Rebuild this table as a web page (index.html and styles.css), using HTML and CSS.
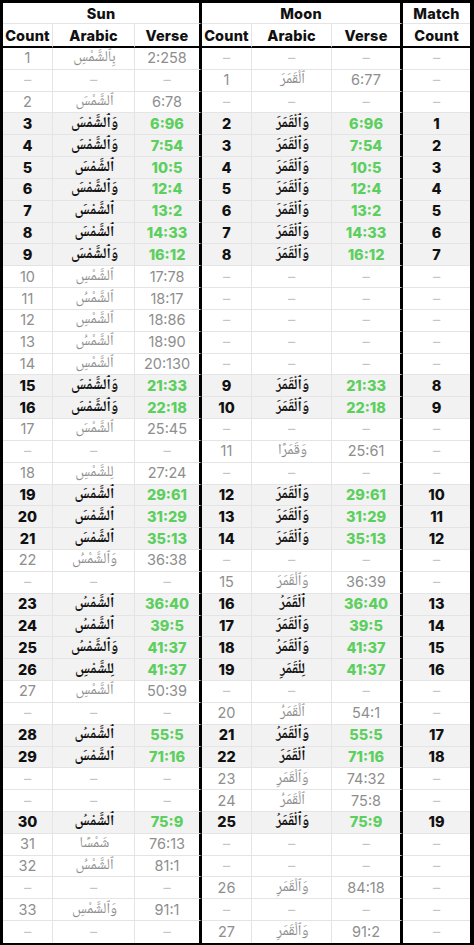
FILE: index.html
```html
<!DOCTYPE html>
<html lang="en">
<head>
<meta charset="utf-8">
<title>Sun and Moon</title>
<link rel="stylesheet" href="styles.css">
</head>
<body>
<table class="grid">
  <colgroup>
    <col class="w-count"><col class="w-ar1"><col class="w-v1">
    <col class="w-count"><col class="w-ar2"><col class="w-v2">
    <col class="w-match">
  </colgroup>
  <thead>
    <tr class="h1">
      <th colspan="3" class="sep">Sun</th>
      <th colspan="3" class="sep">Moon</th>
      <th>Match</th>
    </tr>
    <tr class="h2">
      <th>Count</th><th>Arabic</th><th class="sep">Verse</th>
      <th>Count</th><th>Arabic</th><th class="sep">Verse</th>
      <th>Count</th>
    </tr>
  </thead>
  <tbody>
    <tr class="s"><td>1</td><td class="ar">بِٱلشَّمْسِ</td><td class="sep">2:258</td><td class="d">–</td><td class="d">–</td><td class="sep d">–</td><td class="d">–</td></tr>
    <tr class="o"><td class="d">–</td><td class="d">–</td><td class="sep d">–</td><td>1</td><td class="ar">ٱلْقَمَرَ</td><td class="sep">6:77</td><td class="d">–</td></tr>
    <tr class="s"><td>2</td><td class="ar">ٱلشَّمْسَ</td><td class="sep">6:78</td><td class="d">–</td><td class="d">–</td><td class="sep d">–</td><td class="d">–</td></tr>
    <tr class="m"><td>3</td><td class="ar">وَٱلشَّمْسَ</td><td class="sep g">6:96</td><td>2</td><td class="ar">وَٱلْقَمَرَ</td><td class="sep g">6:96</td><td>1</td></tr>
    <tr class="m"><td>4</td><td class="ar">وَٱلشَّمْسَ</td><td class="sep g">7:54</td><td>3</td><td class="ar">وَٱلْقَمَرَ</td><td class="sep g">7:54</td><td>2</td></tr>
    <tr class="m"><td>5</td><td class="ar">ٱلشَّمْسَ</td><td class="sep g">10:5</td><td>4</td><td class="ar">وَٱلْقَمَرَ</td><td class="sep g">10:5</td><td>3</td></tr>
    <tr class="m"><td>6</td><td class="ar">وَٱلشَّمْسَ</td><td class="sep g">12:4</td><td>5</td><td class="ar">وَٱلْقَمَرَ</td><td class="sep g">12:4</td><td>4</td></tr>
    <tr class="m"><td>7</td><td class="ar">ٱلشَّمْسَ</td><td class="sep g">13:2</td><td>6</td><td class="ar">وَٱلْقَمَرَ</td><td class="sep g">13:2</td><td>5</td></tr>
    <tr class="m"><td>8</td><td class="ar">ٱلشَّمْسَ</td><td class="sep g">14:33</td><td>7</td><td class="ar">وَٱلْقَمَرَ</td><td class="sep g">14:33</td><td>6</td></tr>
    <tr class="m"><td>9</td><td class="ar">وَٱلشَّمْسَ</td><td class="sep g">16:12</td><td>8</td><td class="ar">وَٱلْقَمَرَ</td><td class="sep g">16:12</td><td>7</td></tr>
    <tr class="s"><td>10</td><td class="ar">ٱلشَّمْسِ</td><td class="sep">17:78</td><td class="d">–</td><td class="d">–</td><td class="sep d">–</td><td class="d">–</td></tr>
    <tr class="s"><td>11</td><td class="ar">ٱلشَّمْسُ</td><td class="sep">18:17</td><td class="d">–</td><td class="d">–</td><td class="sep d">–</td><td class="d">–</td></tr>
    <tr class="s"><td>12</td><td class="ar">ٱلشَّمْسِ</td><td class="sep">18:86</td><td class="d">–</td><td class="d">–</td><td class="sep d">–</td><td class="d">–</td></tr>
    <tr class="s"><td>13</td><td class="ar">ٱلشَّمْسُ</td><td class="sep">18:90</td><td class="d">–</td><td class="d">–</td><td class="sep d">–</td><td class="d">–</td></tr>
    <tr class="s"><td>14</td><td class="ar">ٱلشَّمْسِ</td><td class="sep">20:130</td><td class="d">–</td><td class="d">–</td><td class="sep d">–</td><td class="d">–</td></tr>
    <tr class="m"><td>15</td><td class="ar">وَٱلشَّمْسَ</td><td class="sep g">21:33</td><td>9</td><td class="ar">وَٱلْقَمَرَ</td><td class="sep g">21:33</td><td>8</td></tr>
    <tr class="m"><td>16</td><td class="ar">وَٱلشَّمْسَ</td><td class="sep g">22:18</td><td>10</td><td class="ar">وَٱلْقَمَرَ</td><td class="sep g">22:18</td><td>9</td></tr>
    <tr class="s"><td>17</td><td class="ar">ٱلشَّمْسَ</td><td class="sep">25:45</td><td class="d">–</td><td class="d">–</td><td class="sep d">–</td><td class="d">–</td></tr>
    <tr class="o"><td class="d">–</td><td class="d">–</td><td class="sep d">–</td><td>11</td><td class="ar">وَقَمَرًا</td><td class="sep">25:61</td><td class="d">–</td></tr>
    <tr class="s"><td>18</td><td class="ar">لِلشَّمْسِ</td><td class="sep">27:24</td><td class="d">–</td><td class="d">–</td><td class="sep d">–</td><td class="d">–</td></tr>
    <tr class="m"><td>19</td><td class="ar">ٱلشَّمْسَ</td><td class="sep g">29:61</td><td>12</td><td class="ar">وَٱلْقَمَرَ</td><td class="sep g">29:61</td><td>10</td></tr>
    <tr class="m"><td>20</td><td class="ar">ٱلشَّمْسَ</td><td class="sep g">31:29</td><td>13</td><td class="ar">وَٱلْقَمَرَ</td><td class="sep g">31:29</td><td>11</td></tr>
    <tr class="m"><td>21</td><td class="ar">ٱلشَّمْسَ</td><td class="sep g">35:13</td><td>14</td><td class="ar">وَٱلْقَمَرَ</td><td class="sep g">35:13</td><td>12</td></tr>
    <tr class="s"><td>22</td><td class="ar">وَٱلشَّمْسُ</td><td class="sep">36:38</td><td class="d">–</td><td class="d">–</td><td class="sep d">–</td><td class="d">–</td></tr>
    <tr class="o"><td class="d">–</td><td class="d">–</td><td class="sep d">–</td><td>15</td><td class="ar">وَٱلْقَمَرَ</td><td class="sep">36:39</td><td class="d">–</td></tr>
    <tr class="m"><td>23</td><td class="ar">ٱلشَّمْسُ</td><td class="sep g">36:40</td><td>16</td><td class="ar">ٱلْقَمَرُ</td><td class="sep g">36:40</td><td>13</td></tr>
    <tr class="m"><td>24</td><td class="ar">ٱلشَّمْسُ</td><td class="sep g">39:5</td><td>17</td><td class="ar">وَٱلْقَمَرَ</td><td class="sep g">39:5</td><td>14</td></tr>
    <tr class="m"><td>25</td><td class="ar">وَٱلشَّمْسُ</td><td class="sep g">41:37</td><td>18</td><td class="ar">وَٱلْقَمَرُ</td><td class="sep g">41:37</td><td>15</td></tr>
    <tr class="m"><td>26</td><td class="ar">لِلشَّمْسِ</td><td class="sep g">41:37</td><td>19</td><td class="ar">لِلْقَمَرِ</td><td class="sep g">41:37</td><td>16</td></tr>
    <tr class="s"><td>27</td><td class="ar">ٱلشَّمْسِ</td><td class="sep">50:39</td><td class="d">–</td><td class="d">–</td><td class="sep d">–</td><td class="d">–</td></tr>
    <tr class="o"><td class="d">–</td><td class="d">–</td><td class="sep d">–</td><td>20</td><td class="ar">ٱلْقَمَرُ</td><td class="sep">54:1</td><td class="d">–</td></tr>
    <tr class="m"><td>28</td><td class="ar">ٱلشَّمْسُ</td><td class="sep g">55:5</td><td>21</td><td class="ar">وَٱلْقَمَرُ</td><td class="sep g">55:5</td><td>17</td></tr>
    <tr class="m"><td>29</td><td class="ar">ٱلشَّمْسَ</td><td class="sep g">71:16</td><td>22</td><td class="ar">ٱلْقَمَرَ</td><td class="sep g">71:16</td><td>18</td></tr>
    <tr class="o"><td class="d">–</td><td class="d">–</td><td class="sep d">–</td><td>23</td><td class="ar">وَٱلْقَمَرِ</td><td class="sep">74:32</td><td class="d">–</td></tr>
    <tr class="o"><td class="d">–</td><td class="d">–</td><td class="sep d">–</td><td>24</td><td class="ar">ٱلْقَمَرُ</td><td class="sep">75:8</td><td class="d">–</td></tr>
    <tr class="m"><td>30</td><td class="ar">ٱلشَّمْسُ</td><td class="sep g">75:9</td><td>25</td><td class="ar">وَٱلْقَمَرُ</td><td class="sep g">75:9</td><td>19</td></tr>
    <tr class="s"><td>31</td><td class="ar">شَمْسًا</td><td class="sep">76:13</td><td class="d">–</td><td class="d">–</td><td class="sep d">–</td><td class="d">–</td></tr>
    <tr class="s"><td>32</td><td class="ar">ٱلشَّمْسُ</td><td class="sep">81:1</td><td class="d">–</td><td class="d">–</td><td class="sep d">–</td><td class="d">–</td></tr>
    <tr class="o"><td class="d">–</td><td class="d">–</td><td class="sep d">–</td><td>26</td><td class="ar">وَٱلْقَمَرِ</td><td class="sep">84:18</td><td class="d">–</td></tr>
    <tr class="s"><td>33</td><td class="ar">وَٱلشَّمْسِ</td><td class="sep">91:1</td><td class="d">–</td><td class="d">–</td><td class="sep d">–</td><td class="d">–</td></tr>
    <tr class="o last"><td class="d">–</td><td class="d">–</td><td class="sep d">–</td><td>27</td><td class="ar">وَٱلْقَمَرِ</td><td class="sep">91:2</td><td class="d">–</td></tr>
  </tbody>
</table>
</body>
</html>
```
FILE: styles.css
```css
html, body {
  margin: 0;
  padding: 0;
  background: #ffffff;
}

.grid {
  width: 474px;
  table-layout: fixed;
  border-collapse: separate;
  border-spacing: 0;
  border-style: solid;
  border-color: #000;
  border-width: 3px 4px 3px 3px;
  font-family: Inter, "Liberation Sans", sans-serif;
  color: #111;
}

.w-count { width: 50px; }
.w-ar1 { width: 82px; }
.w-v1 { width: 67px; }
.w-ar2 { width: 80px; }
.w-v2 { width: 71px; }
.w-match { width: 67px; }

.grid th,
.grid td {
  padding: 0;
  text-align: center;
  vertical-align: middle;
  border-right: 1px solid #e4e4e4;
  border-bottom: 1px solid #e4e4e4;
  white-space: nowrap;
  box-sizing: border-box;
}

.grid th:last-child,
.grid td:last-child {
  border-right: 0;
}

.grid .sep {
  border-right: 3px solid #000;
}

.grid th {
  font-weight: 800;
  font-size: 14.5px;
  color: #111;
  letter-spacing: 0.2px;
}

.h1 th {
  height: 20px;
  line-height: 18px;
  padding-top: 2px;
}

.h2 th {
  height: 24px;
  border-bottom: 2px solid #000;
}

.grid td {
  height: 21.83px;
  font-size: 14.5px;
  line-height: 20px;
}

.grid tr.last td {
  border-bottom: 0;
}

.s td,
.o td {
  color: #8e8e8e;
  font-weight: 400;
}

.grid td.d {
  color: #c4c4c4;
  font-weight: 400;
}

.m td {
  background: #f2f2f2;
  font-weight: 800;
  color: #111;
}

.m td.g {
  color: #5ccf5e;
}

.grid td.ar {
  font-family: "Noto Naskh Arabic", "Amiri", "Scheherazade New", "DejaVu Sans", serif;
  font-size: 15px;
  line-height: 18px;
  direction: rtl;
}

.m td.ar {
  font-weight: 700;
}
```
